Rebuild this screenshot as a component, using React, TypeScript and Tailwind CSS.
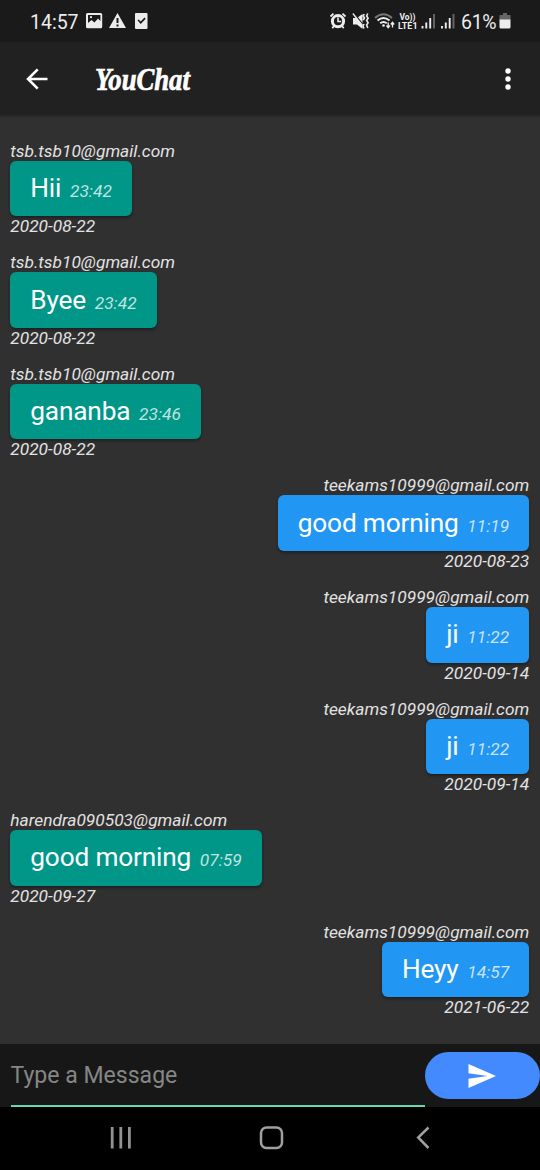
import React from "react";

type Message = { sender: string; text: string; time: string; date: string; mine?: boolean };

const messages: Message[] = [
  { sender: "tsb.tsb10@gmail.com", text: "Hii", time: "23:42", date: "2020-08-22" },
  { sender: "tsb.tsb10@gmail.com", text: "Byee", time: "23:42", date: "2020-08-22" },
  { sender: "tsb.tsb10@gmail.com", text: "gananba", time: "23:46", date: "2020-08-22" },
  { sender: "teekams10999@gmail.com", text: "good morning", time: "11:19", date: "2020-08-23", mine: true },
  { sender: "teekams10999@gmail.com", text: "ji", time: "11:22", date: "2020-09-14", mine: true },
  { sender: "teekams10999@gmail.com", text: "ji", time: "11:22", date: "2020-09-14", mine: true },
  { sender: "harendra090503@gmail.com", text: "good morning", time: "07:59", date: "2020-09-27" },
  { sender: "teekams10999@gmail.com", text: "Heyy", time: "14:57", date: "2021-06-22", mine: true },
];

function NotificationIcons() {
  return (
    <svg className="ml-[8px] h-[18px] w-[64px]" viewBox="86 12 64 18" fill="#ececec">
      <path fillRule="evenodd" d="M87.5 13h13.2a1.5 1.5 0 0 1 1.5 1.5v12.2a1.5 1.5 0 0 1-1.5 1.5H87.5a1.500 1.500 0 0 1-1.500-1.500V14.500a1.500 1.500 0 0 1 1.500-1.500zM88 15v8l3.500-3 3 2.500 3.500-4 2.400 2.600V15z" />
      <circle cx="91" cy="17.200" r="1.100" />
      <path fillRule="evenodd" d="M117.500 13l8.500 15h-17zM116.500 18v5h2v-5zM116.500 24.500v2h2v-2z" />
      <path fillRule="evenodd" d="M136 13h10.500a1 1 0 0 1 1 1v14a1 1 0 0 1-1 1H136a1 1 0 0 1-1-1V14a1 1 0 0 1 1-1zM137.500 20.300l3.200 3.700 5-5.300-1.200-1.100-3.800 4-2-2.200z" />
    </svg>
  );
}

function SystemIcons() {
  return (
    <svg className="h-[20px] w-[130px]" viewBox="328 11 130 20" fill="none" stroke="#ededed">
      <circle cx="337" cy="21.200" r="5.600" strokeWidth="3" />
      <path d="M337 17.500v4h3.200" strokeWidth="1.600" />
      <path d="M329.500 16.500l3-2.800M344.500 16.500l-3-2.800M333 26l-1.700 2.200M341 26l1.700 2.200" strokeWidth="1.800" />
      <path d="M352 18h4l5.500-4v15l-5.500-4.500h-4z" fill="#ededed" stroke="none" />
      <path d="M353 13.500l10 12.500" stroke="#1a1a1a" strokeWidth="1.500" />
      <path d="M351.800 13.500l9.700 12" strokeWidth="1.300" />
      <path d="M363.200 14l-1 2 1.300 2-1.300 2M363 24l-1 2 1 2.500M366.800 13.500l-1.200 2.500 1.500 2.200-1.500 2.300 1.500 2.300-1.500 2.200 1.200 3" strokeWidth="1.600" />
      <path d="M374 18q8.500-7.500 17 0" stroke="#777" strokeWidth="2" />
      <path d="M376.500 20.500q6-5 12 0M379.200 23.300q3.300-2.700 6.600 0" strokeWidth="2" />
      <circle cx="382.500" cy="25.500" r="1.300" fill="#ededed" stroke="none" />
      <path d="M387.200 22.500v5M385.500 25.500l1.700 2.200 1.700-2.200M391.500 27.500v-5M389.800 24.500l1.700-2.200 1.700 2.200" strokeWidth="1.300" />
      <g fill="#ededed" stroke="none" fontFamily="Roboto, sans-serif" fontWeight="700">
        <text x="398.500" y="19.700" fontSize="9.500" textLength="16" lengthAdjust="spacingAndGlyphs">Vo))</text>
        <text x="397" y="28.700" fontSize="9" textLength="19.500" lengthAdjust="spacingAndGlyphs">LTE1</text>
      </g>
      <path d="M421.500 26v2.500M425.300 22.500v6M429.200 18v10.500M441 26v2.500M444.800 22.500v6M448.700 18v10.500" strokeWidth="1.900" />
      <path d="M433 14v14.500M452.500 14v14.500" stroke="#666" strokeWidth="1.900" />
    </svg>
  );
}

function StatusBar() {
  return (
    <div className="flex h-[42px] shrink-0 items-center bg-[#1a1a1a] pl-[30px] pr-[29px] text-[#ececec]">
      <span className="w-[48px] whitespace-nowrap pt-[3px] text-[19.500px] leading-none">14:57</span>
      <NotificationIcons />
      <div className="ml-auto flex items-center">
        <SystemIcons />
        <span className="ml-[2px] w-[37px] whitespace-nowrap pt-[3px] text-[19.500px] leading-none tracking-[-0.300px]">61%</span>
        <svg className="ml-[1px] h-[18px] w-[12px]" viewBox="0 0 12 18">
          <path d="M4 1h4v2h3.500v5H.5V3H4z" fill="#666" />
          <path d="M.5 7.500h11V15a1.500 1.500 0 0 1-1.500 1.500H2A1.500 1.500 0 0 1 .5 15z" fill="#eee" />
        </svg>
      </div>
    </div>
  );
}

function AppHeader() {
  return (
    <header className="flex h-[73px] shrink-0 items-center bg-[#212121] pl-[26px] pr-[28px]">
      <svg className="h-[22px] w-[22px]" viewBox="0 0 22 22" fill="none" stroke="white" strokeWidth="2.600">
        <path d="M21.500 11H2M11.700 1.300L2 11l9.700 9.700" />
      </svg>
      <h1 className="ml-[47px] w-[96px] origin-left scale-x-[0.860] whitespace-nowrap pt-[1px] font-['Liberation_Serif',serif] text-[31px] font-bold italic leading-none text-white [-webkit-text-stroke:0.700px_white]">YouChat</h1>
      <svg className="ml-auto h-[22px] w-[8px]" viewBox="0 0 8 22" fill="white">
        <circle cx="4" cy="3" r="2.700" />
        <circle cx="4" cy="11" r="2.700" />
        <circle cx="4" cy="19" r="2.700" />
      </svg>
    </header>
  );
}

function MessageItem({ message }: { message: Message }) {
  return (
    <li className={message.mine ? "flex flex-col items-end" : "flex flex-col items-start"}>
      <span className="h-[20px] text-[17.340px] italic leading-[20px] text-[#e2e2e2]">{message.sender}</span>
      <div
        className={
          message.mine
            ? "flex h-[55.570px] items-baseline rounded-[6px] bg-[#2196f3] px-[20px] pt-[12.300px] shadow-[0_2px_3px_rgba(0,0,0,0.35)]"
            : "flex h-[55.570px] items-baseline rounded-[6px] bg-[#009688] px-[20px] pt-[12.300px] shadow-[0_2px_3px_rgba(0,0,0,0.35)]"
        }
      >
        <span className="text-[26.250px] leading-[31px] tracking-[-0.180px] text-white">{message.text}</span>
        <span className="ml-[8.700px] text-[17.340px] italic leading-[20px] text-white/75">{message.time}</span>
      </div>
      <span className="h-[20px] text-[17.340px] italic leading-[20px] text-[#e2e2e2]">{message.date}</span>
    </li>
  );
}

function Composer() {
  return (
    <div className="flex h-[63px] shrink-0 bg-[#171717] pl-[10.500px]">
      <div className="flex flex-1 border-b-2 border-[#64d8b4]">
        <input
          className="h-[61px] w-full bg-transparent pt-[2px] text-[23.050px] text-white outline-none placeholder:text-[#868686]"
          placeholder="Type a Message"
        />
      </div>
      <button className="mt-[8px] flex h-[47px] w-[115.500px] items-center justify-center rounded-full bg-[#448aff]">
        <svg className="h-[24px] w-[28px]" viewBox="0 0 28 24" fill="white">
          <path d="M.500 0L28 12 .500 24v-9.300L19.500 12 .500 9.300z" />
        </svg>
      </button>
    </div>
  );
}

function NavigationBar() {
  return (
    <nav className="flex h-[63px] shrink-0 items-start bg-black pl-[110px] pt-[19px]">
      <svg className="h-[24px] w-[22px]" viewBox="0 0 22 24" stroke="#929292" strokeWidth="2.800">
        <path d="M2.200 1v21.500M10.800 1v21.500M19.400 1v21.500" />
      </svg>
      <svg className="ml-[127px] h-[24px] w-[25px]" viewBox="0 0 25 24" fill="none" stroke="#a0a0a0" strokeWidth="2.500">
        <rect x="2" y="1.500" width="21" height="20.500" rx="5.500" />
      </svg>
      <svg className="ml-[132px] h-[24px] w-[14px]" viewBox="0 0 14 24" fill="none" stroke="#a0a0a0" strokeWidth="2.500">
        <path d="M12.500 1.500L2.200 11.500l10.300 10.500" />
      </svg>
    </nav>
  );
}

export default function App() {
  return (
    <div className="flex h-[1170px] w-[540px] flex-col overflow-hidden bg-[#303030] font-[Roboto,sans-serif]">
      <StatusBar />
      <AppHeader />
      <ul className="flex min-h-0 flex-1 flex-col gap-[16px] border-t-2 border-[#292929] pl-[10.300px] pr-[10.800px] pt-[23.800px]">
        {messages.map((message, index) => (
          <MessageItem key={index} message={message} />
        ))}
      </ul>
      <Composer />
      <NavigationBar />
    </div>
  );
}
